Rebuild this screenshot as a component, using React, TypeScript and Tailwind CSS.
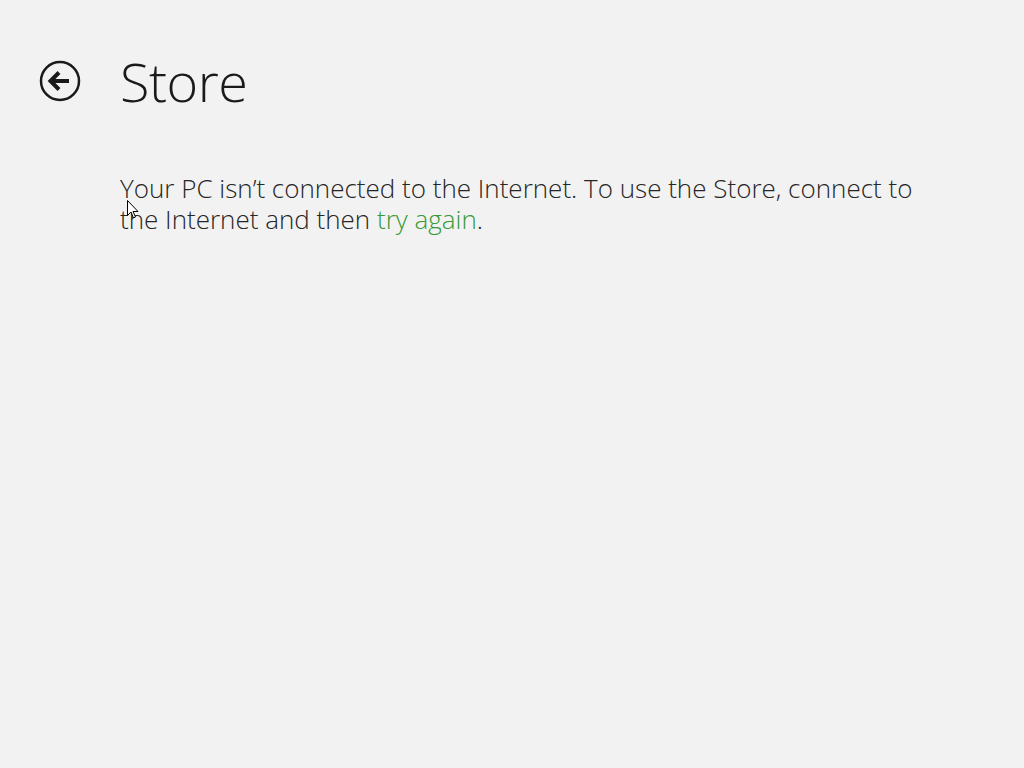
export default function App() {
  return (
    <div className="relative w-[1024px] h-[768px] bg-[#f2f2f2] overflow-hidden" style={{ fontFamily: '"Open Sans", "Noto Sans", sans-serif' }}>
      <div className="flex items-center pt-[46px] pl-[39px]">
        <svg width="42" height="42" viewBox="0 0 42 42" className="shrink-0">
          <circle cx="21" cy="21" r="19" fill="none" stroke="#1a1a1a" strokeWidth="2.5" />
          <path d="M11.5 21 H30" stroke="#1a1a1a" strokeWidth="4" fill="none" />
          <path d="M20 12.5 L11.5 21 L20 29.5" stroke="#1a1a1a" strokeWidth="4" fill="none" strokeLinejoin="miter" />
        </svg>
        <h1 className="ml-[39px] text-[54px] leading-[70px] font-light text-[#1a1a1a] tracking-[-0.5px]">Store</h1>
      </div>
      <p className="mt-[57px] ml-[120px] w-[830px] text-[26px] leading-[31px] font-light text-[#262626]">
        Your PC isn’t connected to the Internet. To use the Store, connect to the Internet and then{' '}
        <span className="text-[#369a36]">try again</span>.
      </p>
      <svg className="absolute left-[127px] top-[200px]" width="12" height="19" viewBox="0 0 12 19">
        <path d="M0.5 0.5 L0.5 15.5 L4 12 L6.5 18 L8.5 17 L6 11.5 L11 11.5 Z" fill="#ffffff" stroke="#000000" strokeWidth="1" />
      </svg>
    </div>
  );
}
